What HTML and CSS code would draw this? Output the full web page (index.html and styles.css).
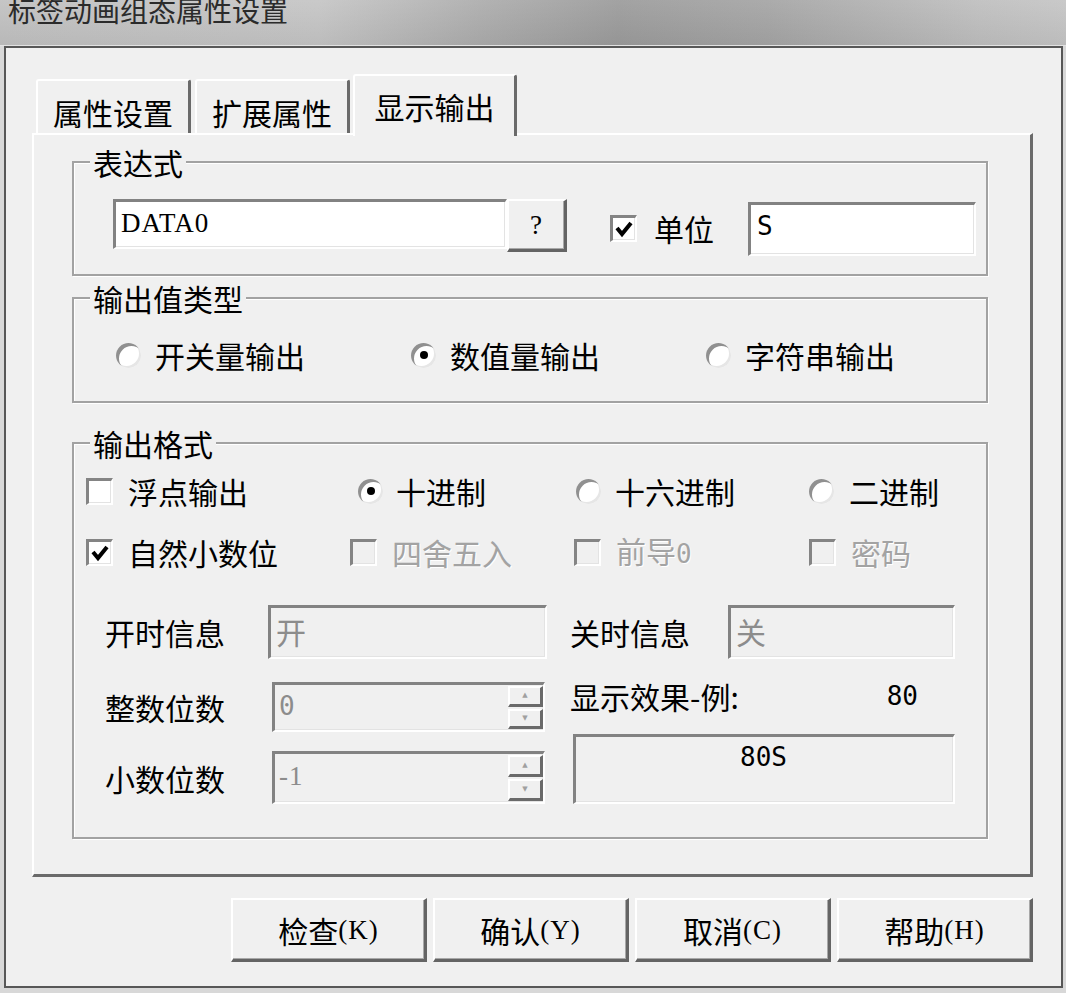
FILE: index.html
```html
<!DOCTYPE html>
<html lang="zh-CN">
<head>
<meta charset="utf-8">
<title>标签动画组态属性设置</title>
<link rel="stylesheet" href="styles.css">
</head>
<body>
<div class="titlebar"><span class="title">标签动画组态属性设置</span></div>
<div class="dialog">
  <div class="tabs">
    <div class="tab t1">属性设置</div>
    <div class="tab t2">扩展属性</div>
    <div class="tab active">显示输出</div>
  </div>
  <div class="panel">
    <fieldset class="group g1">
      <legend>表达式</legend>
      <div class="expr-row">
        <div class="edit expr"><span class="lt">DATA0</span></div>
        <div class="btn qbtn"><span class="lt">?</span></div>
        <div class="opt unit">
          <span class="cb"><svg viewBox="0 0 22 22" width="22" height="22"><polyline points="4,10 9,16 18,5" fill="none" stroke="#000" stroke-width="4"/></svg></span>
          <span>单位</span>
        </div>
        <div class="edit unit-edit"><span class="ls">S</span></div>
      </div>
    </fieldset>

    <fieldset class="group g2">
      <legend>输出值类型</legend>
      <div class="radio-row">
        <div class="opt"><span class="rb"></span><span>开关量输出</span></div>
        <div class="opt"><span class="rb on"></span><span>数值量输出</span></div>
        <div class="opt"><span class="rb"></span><span>字符串输出</span></div>
      </div>
    </fieldset>

    <fieldset class="group g3">
      <legend>输出格式</legend>
      <div class="fmt-opts">
        <div class="opt"><span class="cb"></span><span>浮点输出</span></div>
        <div class="opt r1"><span class="rb on"></span><span>十进制</span></div>
        <div class="opt r2"><span class="rb"></span><span>十六进制</span></div>
        <div class="opt"><span class="rb"></span><span>二进制</span></div>
        <div class="opt"><span class="cb"><svg viewBox="0 0 22 22" width="22" height="22"><polyline points="4,10 9,16 18,5" fill="none" stroke="#000" stroke-width="4"/></svg></span><span>自然小数位</span></div>
        <div class="opt dis"><span class="cb off"></span><span>四舍五入</span></div>
        <div class="opt dis"><span class="cb off"></span><span>前导<span class="ls">0</span></span></div>
        <div class="opt dis"><span class="cb off"></span><span>密码</span></div>
      </div>
      <div class="fmt-fields">
        <div class="col-left">
          <div class="field-row on-row">
            <span class="flabel">开时信息</span>
            <div class="edit dis on-edit">开</div>
          </div>
          <div class="field-row spin-row int-row">
            <span class="flabel">整数位数</span>
            <div class="edit dis spin">
              <span class="spin-text ls">0</span>
              <span class="spin-btns"><span class="sb">&#9650;</span><span class="sb">&#9660;</span></span>
            </div>
          </div>
          <div class="field-row spin-row dec-row">
            <span class="flabel">小数位数</span>
            <div class="edit dis spin">
              <span class="spin-text lt">-1</span>
              <span class="spin-btns"><span class="sb">&#9650;</span><span class="sb">&#9660;</span></span>
            </div>
          </div>
        </div>
        <div class="col-right">
          <div class="field-row off-row">
            <span class="flabel rlabel">关时信息</span>
            <div class="edit dis off-edit">关</div>
          </div>
          <div class="preview-line"><span>显示效果-例:</span><span class="ls">80</span></div>
          <div class="preview-box"><span class="ls">80S</span></div>
        </div>
      </div>
    </fieldset>
  </div>
  <div class="buttons">
    <div class="btn dbtn">检查<span class="lt">(K)</span></div>
    <div class="btn dbtn">确认<span class="lt">(Y)</span></div>
    <div class="btn dbtn">取消<span class="lt">(C)</span></div>
    <div class="btn dbtn">帮助<span class="lt">(H)</span></div>
  </div>
</div>
</body>
</html>
```

FILE: styles.css
```css
html, body {
  margin: 0;
  padding: 0;
}
body {
  background: #d8d8d8;
  font-family: "Noto Sans CJK SC", "Noto Sans", sans-serif;
  font-size: 30px;
  line-height: 30px;
  color: #000;
  width: 1066px;
  height: 993px;
  overflow: hidden;
}
.lt {
  font-family: "Liberation Serif", "Noto Sans CJK SC", serif;
  font-size: 27px;
  letter-spacing: 1px;
}
.ls {
  font-family: "DejaVu Sans Mono", "Noto Sans CJK SC", monospace;
  font-size: 26px;
}

/* title bar */
.titlebar {
  box-sizing: border-box;
  height: 46px;
  padding-left: 8px;
  border-bottom: 1px solid #e2e2e2;
  background:
    linear-gradient(180deg, rgba(255,255,255,0.06) 0%, rgba(0,0,0,0.05) 100%),
    linear-gradient(90deg, #c2c2c2 0%, #c6c6c6 30%, #aeaeae 45%, #9d9d9d 58%, #a6a6a6 72%, #c0c0c0 92%, #c6c6c6 100%);
}
.title {
  display: block;
  font-size: 28px;
  line-height: 20px;
  color: #2b2b2b;
}

/* dialog frame */
.dialog {
  box-sizing: border-box;
  width: 1059px;
  height: 942px;
  margin-left: 4px;
  border: 2px solid #575757;
  background: #f0f0f0;
  padding: 0 28px 0 26px;
}

/* tabs */
.tabs {
  height: 85px;
  display: flex;
  align-items: flex-end;
  padding-left: 4px;
}
.tab {
  box-sizing: border-box;
  height: 54px;
  padding-top: 16px;
  text-align: center;
  border-top: 2px solid #fff;
  border-left: 2px solid #fff;
  border-right: 3px solid #6a6a6a;
  border-radius: 3px 3px 0 0;
  background: #f0f0f0;
}
.t1 { width: 155px; margin-right: 4px; }
.t2 { width: 155px; margin-right: 3px; }
.tab.active {
  width: 164px;
  height: 62px;
  padding-top: 15px;
  margin-bottom: -3px;
  position: relative;
  z-index: 1;
}

/* panel */
.panel {
  box-sizing: border-box;
  height: 744px;
  border-top: 2px solid #fff;
  border-left: 2px solid #fff;
  border-right: 3px solid #6a6a6a;
  border-bottom: 3px solid #6a6a6a;
  padding: 0 42px 0 38px;
}

/* group boxes */
.group {
  margin: 0;
  padding: 0;
  min-width: 0;
  border: 2px solid #a2a2a2;
  box-shadow: 1px 1px 0 #fff, inset 1px 1px 0 #fff;
}
.group legend {
  padding: 0 3px;
  margin-left: 16px;
  line-height: 30px;
  background: #f0f0f0;
}
.g1 { margin-top: 12px; }
.g2 { margin-top: 7px; }
.g3 { margin-top: 25px; }

.opt {
  display: flex;
  align-items: center;
  gap: 15px;
  height: 30px;
  white-space: nowrap;
}
.opt.dis {
  color: #a3a3a3;
  text-shadow: 1px 1px 0 #fff;
}

/* checkbox */
.cb {
  box-sizing: border-box;
  width: 27px;
  height: 27px;
  flex: none;
  background: #fff;
  border-style: solid;
  border-width: 3px 2px 2px 3px;
  border-color: #848484 #fff #fff #848484;
  box-shadow: inset -1px -1px 0 #e3e3e3;
  display: flex;
  align-items: center;
  justify-content: center;
}
.cb.off {
  background: #f0f0f0;
}

/* radio */
.rb {
  box-sizing: border-box;
  width: 25px;
  height: 25px;
  flex: none;
  border-radius: 50%;
  background: #fff;
  box-shadow: inset 3px 3px 0 #909090, inset -2px -2px 0 #e6e6e6;
  display: flex;
  align-items: center;
  justify-content: center;
}
.rb.on::after {
  content: "";
  width: 8px;
  height: 8px;
  border-radius: 50%;
  background: #000;
}

/* edits & buttons */
.edit {
  box-sizing: border-box;
  background: #fff;
  border-style: solid;
  border-width: 3px 2px 2px 3px;
  border-color: #828282 #fff #fff #828282;
  box-shadow: inset -1px -1px 0 #e3e3e3;
  padding-left: 5px;
  display: flex;
  align-items: center;
}
.edit.dis {
  background: #f0f0f0;
  color: #8c8c8c;
}
.btn {
  box-sizing: border-box;
  background: #f0f0f0;
  border-style: solid;
  border-width: 2px 3px 3px 2px;
  border-color: #fff #646464 #646464 #fff;
  box-shadow: inset -1px -1px 0 #a8a8a8;
  display: flex;
  align-items: center;
  justify-content: center;
}

/* group 1 */
.expr-row {
  display: flex;
  align-items: flex-start;
  padding: 22px 0 18px 39px;
}
.expr {
  width: 394px;
  height: 50px;
  padding-bottom: 4px;
}
.qbtn {
  width: 60px;
  height: 53px;
}
.unit {
  margin-left: 43px;
  margin-top: 14px;
  gap: 17px;
}
.unit-edit {
  width: 228px;
  height: 54px;
  margin-left: 34px;
  margin-top: 3px;
  padding-left: 6px;
  padding-bottom: 8px;
}

/* group 2 */
.radio-row {
  display: grid;
  grid-template-columns: 295px 295px auto;
  padding: 27px 0 31px 42px;
}
.radio-row .opt { gap: 14px; }

/* group 3 */
.fmt-opts {
  display: grid;
  grid-template-columns: 264px 224px 235px auto;
  row-gap: 31px;
  padding: 18px 0 0 12px;
}
.fmt-opts .r1 { padding-left: 8px; gap: 13px; }
.fmt-opts .r2 { padding-left: 2px; gap: 14px; }

.fmt-fields {
  display: flex;
  gap: 23px;
  margin-top: 38px;
  padding: 0 0 33px 31px;
}
.col-left {
  width: 442px;
  display: flex;
  flex-direction: column;
}
.col-right {
  width: 385px;
  display: flex;
  flex-direction: column;
}
.field-row {
  display: flex;
  align-items: center;
}
.flabel {
  width: 163px;
  flex: none;
}
.rlabel { width: 158px; }
.on-edit {
  width: 279px;
  height: 54px;
  padding-bottom: 4px;
}
.off-edit {
  width: 227px;
  height: 54px;
  padding-bottom: 4px;
}
.int-row { margin-top: 23px; }
.dec-row { margin-top: 19px; }
.spin {
  width: 273px;
  height: 50px;
  margin-left: 4px;
  padding-left: 4px;
  padding-right: 0;
  align-items: stretch;
}
.dec-row .spin { height: 53px; }
.spin-text {
  flex: 1;
  display: flex;
  align-items: center;
  padding-bottom: 4px;
}
.spin-btns {
  width: 35px;
  display: flex;
  flex-direction: column;
  padding: 1px 0 1px;
  gap: 2px;
}
.sb {
  flex: 1;
  box-sizing: border-box;
  background: #f0f0f0;
  border-style: solid;
  border-width: 2px 3px 3px 2px;
  border-color: #fff #6a6a6a #6a6a6a #fff;
  font-family: "DejaVu Sans", sans-serif;
  font-size: 7px;
  line-height: 7px;
  color: #a0a0a0;
  display: flex;
  align-items: center;
  justify-content: center;
}
.preview-line {
  margin-top: 22px;
  display: flex;
  justify-content: space-between;
  padding-right: 37px;
  height: 30px;
  align-items: center;
}
.preview-box {
  box-sizing: border-box;
  margin-top: 23px;
  margin-left: 3px;
  height: 70px;
  border-style: solid;
  border-width: 3px 2px 2px 3px;
  border-color: #828282 #fff #fff #828282;
  box-shadow: inset -1px -1px 0 #e3e3e3;
  text-align: center;
  padding-top: 1px;
  padding-right: 2px;
}

/* bottom buttons */
.buttons {
  display: flex;
  justify-content: flex-end;
  gap: 6px;
  margin-top: 21px;
}
.dbtn {
  width: 196px;
  height: 64px;
}
```
